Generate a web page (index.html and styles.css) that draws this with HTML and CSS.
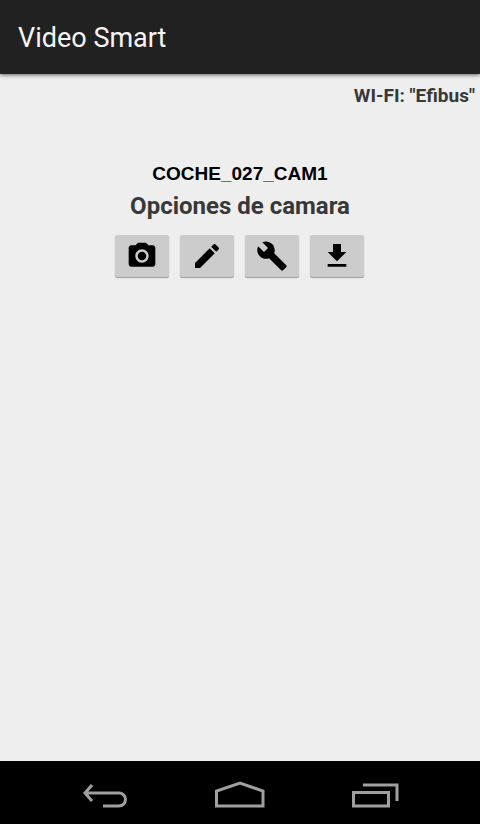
FILE: index.html
```html
<!DOCTYPE html>
<html lang="es">
<head>
<meta charset="utf-8">
<meta name="viewport" content="width=device-width, initial-scale=1">
<title>Video Smart</title>
<link rel="stylesheet" href="styles.css">
</head>
<body>
<header class="app-bar">
  <h1 class="app-title">Video Smart</h1>
</header>
<main class="content">
  <p class="network">WI-FI: "Efibus"</p>
  <section class="camera">
    <p class="camera-name">COCHE_027_CAM1</p>
    <h2 class="camera-heading">Opciones de camara</h2>
    <div class="actions">
      <button class="action" type="button" aria-label="Foto">
        <svg class="action-icon" viewBox="0 0 24 24"><circle cx="12" cy="12" r="3.2"/><path d="M9 2 7.17 4H4c-1.1 0-2 .9-2 2v12c0 1.1.9 2 2 2h16c1.1 0 2-.9 2-2V6c0-1.1-.9-2-2-2h-3.17L15 2H9zm3 15c-2.76 0-5-2.24-5-5s2.24-5 5-5 5 2.24 5 5-2.24 5-5 5z"/></svg>
      </button>
      <button class="action" type="button" aria-label="Editar">
        <svg class="action-icon" viewBox="0 0 24 24"><path d="M3 17.25V21h3.75L17.81 9.94l-3.75-3.75L3 17.25zM20.71 7.04c.39-.39.39-1.02 0-1.41l-2.34-2.34c-.39-.39-1.02-.39-1.41 0l-1.83 1.83 3.75 3.75 1.83-1.83z"/></svg>
      </button>
      <button class="action" type="button" aria-label="Ajustes">
        <svg class="action-icon" viewBox="0 0 24 24"><path d="M22.7 19l-9.1-9.1c.9-2.3.4-5-1.5-6.9-2-2-5-2.4-7.4-1.3L9 6 6 9 1.6 4.7C.4 7.1.9 10.1 2.9 12.1c1.9 1.9 4.6 2.4 6.9 1.5l9.1 9.1c.4.4 1 .4 1.4 0l2.3-2.3c.5-.4.5-1.1.1-1.4z"/></svg>
      </button>
      <button class="action" type="button" aria-label="Descargar">
        <svg class="action-icon" viewBox="0 0 24 24"><path d="M19 9h-4V3H9v6H5l7 7 7-7zM5 18v2h14v-2H5z"/></svg>
      </button>
    </div>
  </section>
</main>
<nav class="nav-bar" aria-label="Sistema">
  <button class="nav-button" type="button" aria-label="Atrás">
    <svg class="nav-icon" viewBox="0 0 50 33"><path d="M12 9 5 17l7 8M5 17H39a6.500 6.500 0 0 1 0 13H23"/></svg>
  </button>
  <button class="nav-button" type="button" aria-label="Inicio">
    <svg class="nav-icon" viewBox="0 0 50 33"><path d="M1.500 30V15L25 7l23 8v15z"/></svg>
  </button>
  <button class="nav-button" type="button" aria-label="Recientes">
    <svg class="nav-icon" viewBox="0 0 50 33"><path d="M3.500 16.500h35v13.500h-35zM13 9h34v16"/></svg>
  </button>
</nav>
</body>
</html>
```

FILE: styles.css
```css
* {
  box-sizing: border-box;
}

body {
  display: flex;
  flex-direction: column;
  min-height: 100vh;
  margin: 0;
  background: #eee;
  color: #383838;
  font-family: Roboto, "Liberation Sans", sans-serif;
}

h1,
h2,
p {
  margin: 0;
}

.app-bar {
  padding: 21px 18px 19px;
  background: #212121;
  box-shadow: 0 1px 4px rgba(0, 0, 0, 0.6);
}

.app-title {
  color: #f5f5f5;
  font-size: 27px;
  font-weight: 400;
  line-height: 34px;
}

.content {
  flex: 1;
}

.network {
  padding: 12px 5px 0;
  font-size: 19px;
  font-weight: 700;
  line-height: 20px;
  text-align: right;
}

.camera {
  padding-top: 56px;
  text-align: center;
}

.camera-name {
  color: #000;
  font-family: "Liberation Sans", sans-serif;
  font-size: 19px;
  font-weight: 700;
  line-height: 24px;
}

.camera-heading {
  font-size: 24px;
  font-weight: 700;
  line-height: 40px;
}

.actions {
  display: flex;
  justify-content: center;
  gap: 11px;
  padding: 9px 1px 0 0;
}

.action {
  display: flex;
  align-items: center;
  justify-content: center;
  width: 54px;
  height: 42px;
  padding: 0;
  border: 0;
  border-radius: 2px;
  background: #ccc;
  box-shadow: 0 1px 1px #999;
}

.action-icon {
  width: 32px;
  height: 32px;
  fill: #000;
}

.nav-bar {
  display: flex;
  justify-content: center;
  gap: 85px;
  padding: 15px 0;
  background: #000;
}

.nav-button {
  padding: 0;
  border: 0;
  background: none;
}

.nav-icon {
  display: block;
  width: 50px;
  height: 33px;
  fill: none;
  stroke: #a0a0a0;
  stroke-width: 3;
}
```
